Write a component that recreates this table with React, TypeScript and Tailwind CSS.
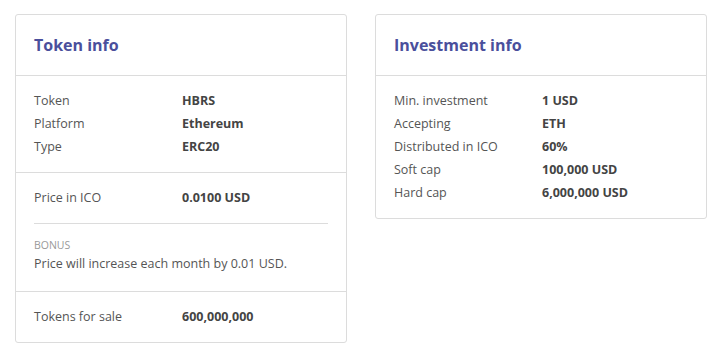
const tokenRows = [
  { label: "Token", value: "HBRS" },
  { label: "Platform", value: "Ethereum" },
  { label: "Type", value: "ERC20" },
];

const investmentRows = [
  { label: "Min. investment", value: "1 USD" },
  { label: "Accepting", value: "ETH" },
  { label: "Distributed in ICO", value: "60%" },
  { label: "Soft cap", value: "100,000 USD" },
  { label: "Hard cap", value: "6,000,000 USD" },
];

function Row({ label, value }: { label: string; value: string }) {
  return (
    <div className="flex leading-[23px]">
      <span className="w-[148px] shrink-0 text-[#555]">{label}</span>
      <span className="font-bold text-[#444]">{value}</span>
    </div>
  );
}

function Card({ title, children }: { title: string; children: React.ReactNode }) {
  return (
    <div className="w-[332px] self-start rounded-[3px] border border-[#dcdcdc] bg-white">
      <div className="flex h-[61px] items-center border-b border-[#dcdcdc] px-[18px]">
        <h2 className="text-[16px] font-bold text-[#4a4f9c]">{title}</h2>
      </div>
      {children}
    </div>
  );
}

export default function App() {
  return (
    <div
      className="flex min-h-[355px] gap-[28px] bg-white pl-[15px] pt-[14px] text-[12.5px]"
      style={{ fontFamily: '"Open Sans", "Liberation Sans", sans-serif' }}
    >
      <Card title="Token info">
        <div className="border-b border-[#dcdcdc] px-[18px] pt-[13px] pb-[14px]">
          {tokenRows.map((r) => (
            <Row key={r.label} {...r} />
          ))}
        </div>
        <div className="border-b border-[#dcdcdc] px-[18px] pt-[13px] pb-[16px]">
          <Row label="Price in ICO" value="0.0100 USD" />
          <div className="mt-[14px] border-t border-[#dcdcdc] pt-[14px]">
            <div className="text-[10.5px] uppercase leading-[15px] text-[#999]">Bonus</div>
            <div className="leading-[22px] text-[#555]">Price will increase each month by 0.01 USD.</div>
          </div>
        </div>
        <div className="px-[18px] pt-[13px] pb-[14px]">
          <Row label="Tokens for sale" value="600,000,000" />
        </div>
      </Card>
      <Card title="Investment info">
        <div className="px-[18px] pt-[13px] pb-[14px]">
          {investmentRows.map((r) => (
            <Row key={r.label} {...r} />
          ))}
        </div>
      </Card>
    </div>
  );
}
